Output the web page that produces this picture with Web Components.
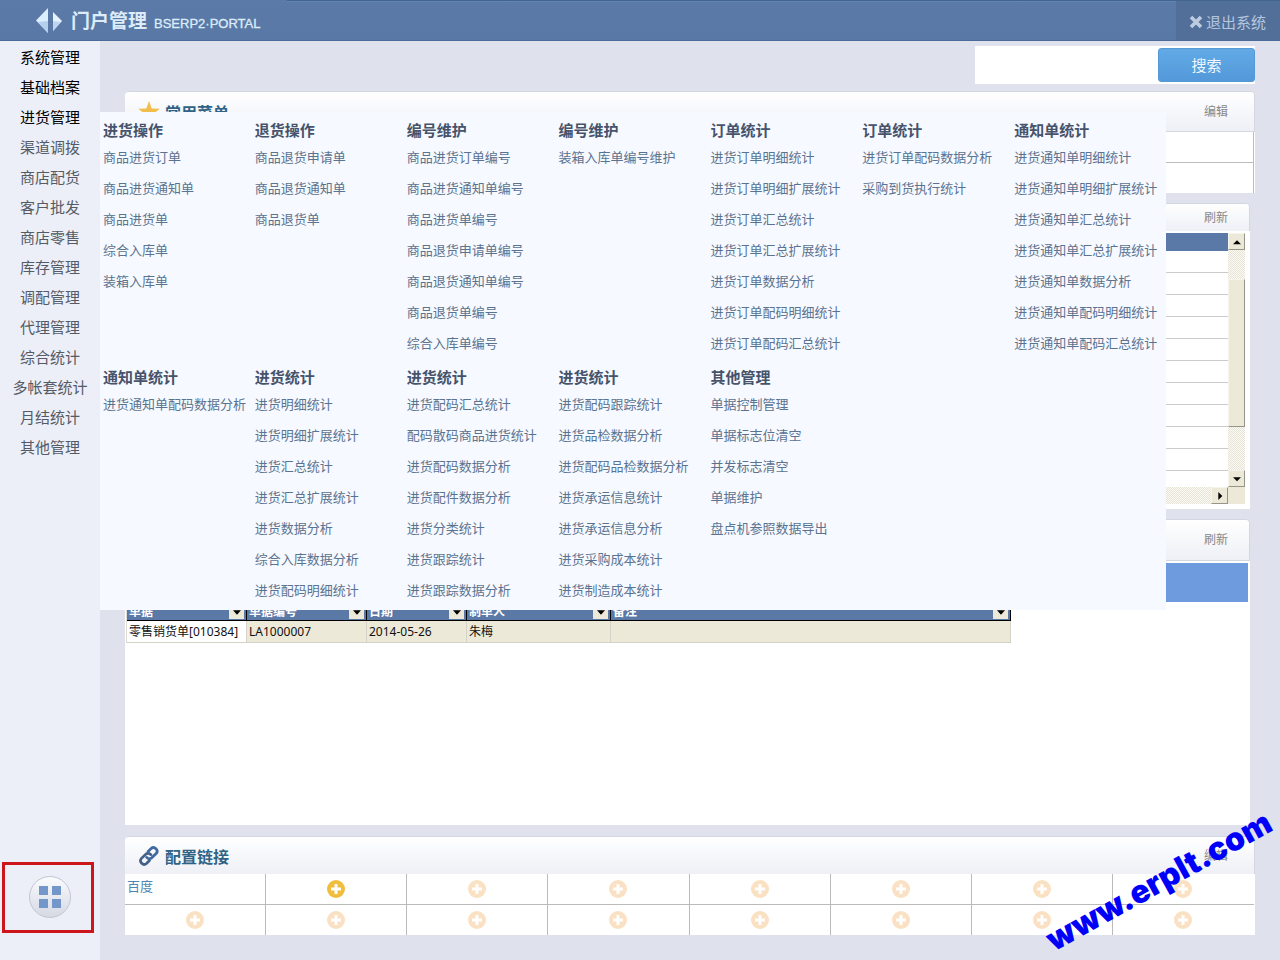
<!DOCTYPE html>
<html lang="zh-CN">
<head>
<meta charset="utf-8">
<title>门户管理 BSERP2·PORTAL</title>
<style>
  html, body { margin: 0; }
  body {
    background: #dfe1ed;
    font-family: "Noto Sans", "Noto Sans CJK SC", sans-serif;
    font-size: 13px;
    color: #333;
  }
</style>
</head>
<body>
<portal-app></portal-app>

<script>
const define = (name, html, setup) => {
  const template = document.createElement('template');
  template.innerHTML = '<style>*{box-sizing:border-box}button{font-family:inherit;padding:0;border:0;cursor:pointer}a{text-decoration:none}</style>' + html;
  customElements.define(name, class extends HTMLElement {
    connectedCallback() {
      if (this.shadowRoot) return;
      const root = this.attachShadow({ mode: 'open' });
      root.append(template.content.cloneNode(true));
      if (setup) setup(root, this);
    }
  });
};

/* Top bar */
define('portal-header', `
<style>
  :host { display: flex; height: 41px; background: linear-gradient(#5c7aa7, #5a78a5); border-bottom: 1px solid #4a6a98; }
  .brand { display: flex; align-items: center; width: 287px; padding-left: 36px; color: #dcecfb; }
  .brand svg { width: 27px; height: 25px; margin-right: 8px; }
  h1 { margin: 0; padding-top: 2px; font-size: 19px; line-height: 40px; font-weight: 700; }
  .sub { margin: 8px 0 0 7px; font-family: "Liberation Sans", sans-serif; font-size: 13px; line-height: 20px; -webkit-text-stroke: 0.3px #dcecfb; }
  .rest { flex: 1; box-shadow: inset 0 1px #41658f, inset 0 2px #6485b1; }
  button { display: flex; align-items: center; width: 104px; padding: 4px 0 0 13px; gap: 3px; background: #526f9a; color: #b5c7de; font-size: 15px; line-height: 20px; box-shadow: inset 0 1px #41658f; white-space: nowrap; }
  button svg { width: 14px; height: 14px; }
</style>
<div class="brand">
  <svg viewBox="0 0 27 25"><path d="M12 0v25L0 12.500z" fill="#dcefff"/><path d="M12 13v12L2 14z" fill="#b5d0ed"/><path d="M17 4v19l9-10z" fill="#e4f3ff"/><path d="M17 13v10l8-9z" fill="#bdd5ef"/></svg>
  <h1>门户管理</h1><span class="sub">BSERP2·PORTAL</span>
</div>
<div class="rest"></div>
<button type="button"><svg viewBox="0 0 14 14"><path d="M2 2l10 10m0-10l-10 10" stroke="#bccbe0" stroke-width="3.600"/></svg>退出系统</button>
`);

/* Left navigation */
define('side-nav', `
<style>
  :host { display: flex; flex-direction: column; width: 100px; padding: 1px 0 27px; background: #eceff8; }
  nav { display: flex; flex-direction: column; }
  a { font-size: 15px; line-height: 30px; text-align: center; color: #555b66; white-space: nowrap; }
  a.strong { color: #000; }
  .launch { display: flex; align-items: center; justify-content: center; height: 71px; margin: auto 6px 0 2px; padding: 0 0 2px 4px; border: 3px solid #cd151c; }
  .launch button { width: 42px; height: 42px; border-radius: 50%; border: 1px solid #c3c7d2; background: linear-gradient(#fafbfd, #d5d9e4); display: grid; place-items: center; }
  svg { width: 22px; height: 22px; }
</style>
<nav></nav>
<div class="launch"><button type="button" aria-label="应用"><svg viewBox="0 0 22 22" fill="#7397cb"><path d="M0 0h9v9H0zM13 0h9v9h-9zM0 13h9v9H0zM13 13h9v9h-9z"/></svg></button></div>
`, root => {
  const items = ['系统管理','基础档案','进货管理','渠道调拨','商店配货','客户批发','商店零售','库存管理','调配管理','代理管理','综合统计','多帐套统计','月结统计','其他管理'];
  root.querySelector('nav').innerHTML = items.map((t, i) => `<a href="#"${i < 3 ? ' class="strong"' : ''}>${t}</a>`).join('');
});

/* Search */
define('search-box', `
<style>
  :host { display: block; }
  form { display: flex; width: 280px; height: 38px; margin: 0 0 0 auto; padding-top: 2px; background: #fff; }
  input { flex: 1; min-width: 0; border: 0; outline: 0; background: #fff; padding: 0 8px; font-size: 14px; }
  button { width: 97px; height: 34px; padding-bottom: 2px; border-radius: 3px; background: linear-gradient(#62a9e6, #5399da); border: 1px solid #5599d6; color: #eef7ff; font-size: 15px; }
</style>
<form><input type="text" aria-label="搜索"><button type="button">搜索</button></form>
`);

/* Panel: icon and title on the left, action on the right, body in the slot */
define('portal-panel', `
<style>
  :host { display: block; background: #fff; border-radius: 4px 4px 0 0; }
  header { display: flex; align-items: center; height: var(--head, 41px); padding: 0 26px 0 13px; border: 1px solid #d3d7e1; border-width: 1px 1px var(--rule, 1px) 0; border-radius: 4px 4px 0 0; background: linear-gradient(#fff, #eef0f6); }
  h2 { flex: 1; margin: 0; padding-top: 2px; font-size: 16px; line-height: 24px; font-weight: 700; color: #2f6285; }
  ::slotted(svg) { width: 22px; height: 22px; margin-right: 5px; }
  button { background: none; color: #888; font-size: 12px; line-height: 18px; margin-right: var(--inset, 0); }
</style>
<header><slot name="icon"></slot><h2></h2><button type="button"></button></header>
<slot></slot>
`, (root, host) => {
  root.querySelector('h2').textContent = host.getAttribute('heading') || '';
  root.querySelector('button').textContent = host.getAttribute('action');
});

/* Shortcut cells */
define('link-grid', `
<style>
  :host { display: grid; grid-template-columns: repeat(8, 1fr); margin-right: 1px; }
  .cell { display: grid; place-items: center; height: 31px; border-right: 1px solid #bbb; border-bottom: 1px solid #bbb; }
  .cell.low { height: 30px; border-bottom: 0; }
  :host(:not([framed])) .cell.end { border-right: 0; }
  a { justify-self: start; align-self: start; padding-left: 2px; font-size: 13px; line-height: 24px; color: #4c88b1; }
  button { width: 18px; height: 18px; border-radius: 50%; background: #fae1c3; display: grid; }
  button.on { background: #f1bd3d; }
  svg { width: 18px; height: 18px; }
</style>
`, (root, host) => {
  const link = host.getAttribute('first');
  for (let i = 0; i < 16; i++) {
    const cell = document.createElement('div');
    cell.className = 'cell' + (i > 7 ? ' low' : '') + (i % 8 === 7 ? ' end' : '');
    if (link) cell.innerHTML = i === 0 ? `<a href="#">${link}</a>` :
      `<button type="button" aria-label="添加"${i === 1 ? ' class="on"' : ''}><svg viewBox="0 0 18 18"><path d="M9 4v10M4 9h10" stroke="#fff" stroke-width="3"/></svg></button>`;
    root.append(cell);
  }
});

/* Scrolling grid with classic scroll bars */
define('scroll-grid', `
<style>
  :host { display: grid; grid-template-columns: 1fr 17px; grid-template-rows: 254px 17px; padding: 2px 5px 5px 2px; }
  .view { overflow: hidden; }
  table { width: 100%; border-collapse: separate; border-spacing: 0; }
  th { height: 18px; padding: 0; background: #5b79a6; }
  td { height: 22px; padding: 0; border-bottom: 1px solid #ccc; }
  .bar { display: flex; background: repeating-conic-gradient(#e6e4d6 0 25%, #fbfaf4 0 50%) 0 0 / 2px 2px; }
  .v { flex-direction: column; }
  .h { justify-content: flex-end; }
  button, .thumb { background: #ece9d8; border: 1px solid #f6f4ea; border-right-color: #97958a; border-bottom-color: #97958a; }
  button { display: grid; place-items: center; width: 17px; height: 17px; flex: none; }
  svg { width: 8px; height: 8px; }
  .thumb { height: 148px; margin: 29px 0 auto; }
  .corner { background: #ece9d8; }
</style>
<div class="view"><table><thead><tr><th></th></tr></thead><tbody></tbody></table></div>
<div class="bar v"><button type="button" aria-label="上"><svg viewBox="0 0 7 7"><path d="M0 5.500h7L3.500 2z"/></svg></button><div class="thumb"></div><button type="button" aria-label="下"><svg viewBox="0 0 7 7"><path d="M0 2h7L3.500 5.500z"/></svg></button></div>
<div class="bar h"><button type="button" aria-label="右"><svg viewBox="0 0 7 7"><path d="M2 0v7l3.500-3.500z"/></svg></button></div>
<div class="corner"></div>
`, root => { root.querySelector('tbody').innerHTML = '<tr><td></td></tr>'.repeat(11); });

/* Document list */
define('doc-table', `
<style>
  :host { display: block; padding: 2px 2px 0 1px; }
  .strip { height: 39px; background: #6d9bde; }
  table { table-layout: fixed; width: 885px; border-collapse: separate; border-spacing: 0; font-size: 12px; line-height: 16px; text-align: left; border-left: 1px solid #dcdcd4; }
  th { height: 19px; padding: 0 2px; background: #5b79a6; color: #fff; border-right: 1px solid #000; border-bottom: 1px solid #000; }
  th div { display: flex; justify-content: space-between; align-items: center; height: 18px; padding-top: 2px; }
  th button { width: 15px; height: 14px; background: #ece9d8; display: grid; place-items: center; }
  th svg { width: 8px; height: 5px; }
  td { height: 22px; padding: 0 2px; background: #ece9d8; border-right: 1px solid #d5d3c8; border-bottom: 1px solid #d5d3c8; color: #111; white-space: nowrap; }
  td:first-child { background: #fff; }
</style>
<div class="strip"></div>
<table>
  <colgroup><col style="width:120px"><col style="width:120px"><col style="width:100px"><col style="width:144px"><col style="width:400px"></colgroup>
  <thead><tr></tr></thead>
  <tbody><tr><td>零售销货单[010384]</td><td>LA1000007</td><td>2014-05-26</td><td>朱梅</td><td></td></tr></tbody>
</table>
`, root => {
  root.querySelector('thead tr').innerHTML = ['单据','单据编号','日期','制单人','备注'].map(t =>
    `<th><div>${t}<button type="button" aria-label="筛选"><svg viewBox="0 0 7 4"><path d="M0 0h7L3.500 4z"/></svg></button></div></th>`).join('');
});

/* One titled list of menu entries */
define('menu-group', `
<style>
  :host { display: block; white-space: nowrap; }
  h3 { margin: 0; font-size: 15px; line-height: 24px; font-weight: 700; color: #46536b; }
  ul { margin: 0; padding: 0; list-style: none; }
  a { display: block; font-size: 13px; line-height: 31px; color: #5a7390; }
</style>
<h3></h3><ul></ul>
`, (root, host) => {
  root.querySelector('h3').textContent = host.getAttribute('heading');
  root.querySelector('ul').innerHTML = host.getAttribute('items').split(' ').map(t => `<li><a href="#">${t}</a></li>`).join('');
});

/* Fly-out menu */
define('mega-menu', `
<style>
  :host { display: grid; grid-template-columns: repeat(7, 1fr); row-gap: 6px; padding: 6px 0 4px 3px; background: #f6f9ff; }
</style>
`, root => {
  const groups = [
    ['进货操作', '商品进货订单 商品进货通知单 商品进货单 综合入库单 装箱入库单'],
    ['退货操作', '商品退货申请单 商品退货通知单 商品退货单'],
    ['编号维护', '商品进货订单编号 商品进货通知单编号 商品进货单编号 商品退货申请单编号 商品退货通知单编号 商品退货单编号 综合入库单编号'],
    ['编号维护', '装箱入库单编号维护'],
    ['订单统计', '进货订单明细统计 进货订单明细扩展统计 进货订单汇总统计 进货订单汇总扩展统计 进货订单数据分析 进货订单配码明细统计 进货订单配码汇总统计'],
    ['订单统计', '进货订单配码数据分析 采购到货执行统计'],
    ['通知单统计', '进货通知单明细统计 进货通知单明细扩展统计 进货通知单汇总统计 进货通知单汇总扩展统计 进货通知单数据分析 进货通知单配码明细统计 进货通知单配码汇总统计'],
    ['通知单统计', '进货通知单配码数据分析'],
    ['进货统计', '进货明细统计 进货明细扩展统计 进货汇总统计 进货汇总扩展统计 进货数据分析 综合入库数据分析 进货配码明细统计'],
    ['进货统计', '进货配码汇总统计 配码散码商品进货统计 进货配码数据分析 进货配件数据分析 进货分类统计 进货跟踪统计 进货跟踪数据分析'],
    ['进货统计', '进货配码跟踪统计 进货品检数据分析 进货配码品检数据分析 进货承运信息统计 进货承运信息分析 进货采购成本统计 进货制造成本统计'],
    ['其他管理', '单据控制管理 单据标志位清空 并发标志清空 单据维护 盘点机参照数据导出']
  ];
  for (const [heading, items] of groups) {
    const g = document.createElement('menu-group');
    g.setAttribute('heading', heading);
    g.setAttribute('items', items);
    root.append(g);
  }
});

/* Site mark laid diagonally over the corner */
define('site-mark', `
<style>
  :host { display: block; font-family: Inter, sans-serif; font-weight: 900; font-size: 32px; line-height: 40px; color: #0000fa; white-space: nowrap; transform: rotate(-29deg); pointer-events: none; }
</style>
<span>www.erplt.com</span>
`);

define('portal-app', `
<style>
  :host { display: flex; flex-direction: column; min-height: 100vh; position: relative; overflow: hidden; }
  .body { display: flex; flex: 1; position: relative; }
  main { flex: 1; min-width: 0; padding: 5px 25px 25px; }
  search-box { margin-bottom: 7px; }
  portal-panel { margin-bottom: 10px; }
  .narrow { margin-right: 5px; }
  .grid { --head: 28px; --rule: 0; --inset: -5px; }
  .docs { --head: 42px; --inset: -5px; min-height: 306px; margin-bottom: 11px; }
  .links { --head: 38px; --rule: 0; margin-bottom: 0; }
  mega-menu { position: absolute; left: 100px; right: 114px; top: 71px; }
  site-mark { position: absolute; right: -5px; bottom: 59px; }
</style>
<portal-header></portal-header>
<div class="body">
  <side-nav></side-nav>
  <main>
    <search-box></search-box>
    <portal-panel heading="常用菜单" action="编辑">
      <svg slot="icon" viewBox="0 0 22 22"><path d="M11 0l2.700 7.600 8.100.200-6.400 4.900 2.300 7.800L11 15.900l-6.700 4.600 2.300-7.800L.200 7.800l8.100-.200z" fill="#f3bd4c"/></svg>
      <link-grid framed></link-grid>
    </portal-panel>
    <portal-panel class="narrow grid" action="刷新"><scroll-grid></scroll-grid></portal-panel>
    <portal-panel class="narrow docs" action="刷新"><doc-table></doc-table></portal-panel>
    <portal-panel class="links" heading="配置链接" action="编辑">
      <svg slot="icon" viewBox="0 0 24 24" fill="none" stroke="#3f69a3" stroke-width="3" stroke-linecap="round"><path d="M9.500 13.500a4 4 0 0 0 5.500.500l4.800-4.600a3.900 3.900 0 0 0-5.500-5.500l-3.300 3.200"/><path d="M14 10.500a4 4 0 0 0-5.500-.500l-4.700 4.600a3.900 3.900 0 0 0 5.500 5.500l3.200-3.200" stroke="#44618c"/></svg>
      <link-grid first="百度"></link-grid>
    </portal-panel>
  </main>
  <mega-menu></mega-menu>
</div>
<site-mark></site-mark>
`);
</script>
</body>
</html>
